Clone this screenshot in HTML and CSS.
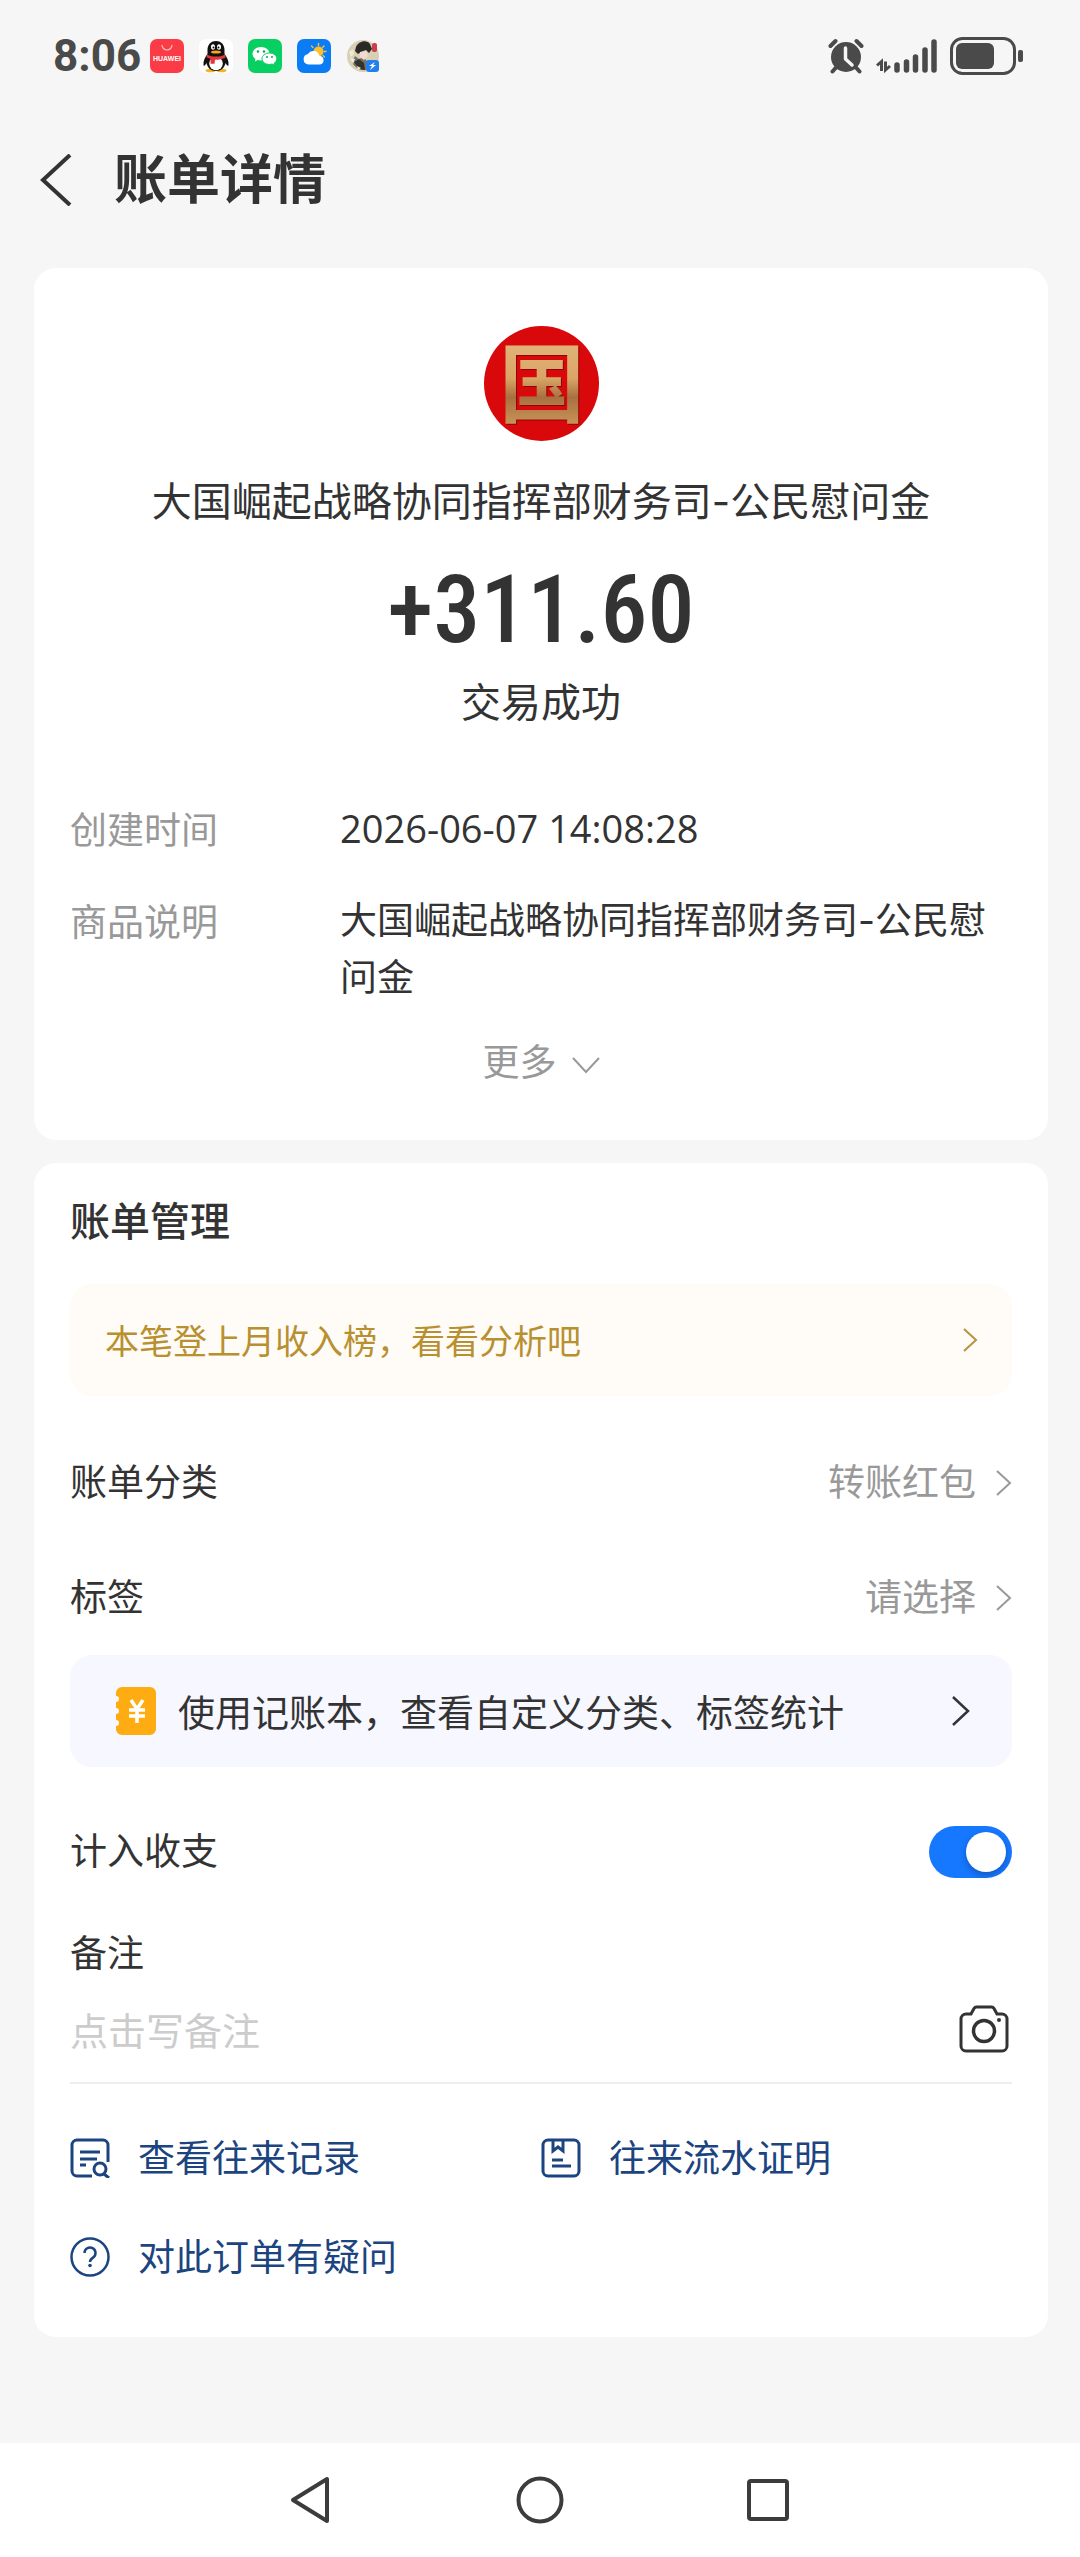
FILE: index.html
```
<!DOCTYPE html>
<html lang="zh-CN">
<head>
  <meta charset="UTF-8" />
  <meta name="viewport" content="width=device-width, initial-scale=1" />
  <title>账单详情</title>
  <link rel="stylesheet" href="styles.css">
</head>
<body>

  <!-- Status Bar -->
  <div class="status-bar">
    <span class="clock">8:06</span>
    <div class="app-icons">
      <svg width="34" height="34" viewBox="0 0 34 34">
        <rect width="34" height="34" rx="7" fill="#fb3b45"/>
        <path d="M12 6a5 5 0 0 0 10 0" fill="none" stroke="#ffc4c6" stroke-width="1.2"/>
        <text x="17" y="22" class="tiny-brand" text-anchor="middle">HUAWEI</text>
      </svg>
      <svg width="34" height="34" viewBox="0 0 34 34">
        <rect width="34" height="34" rx="7" fill="#fff"/>
        <ellipse cx="11.500" cy="31.500" rx="5" ry="1.800" fill="#f5b324"/>
        <ellipse cx="22.500" cy="31.500" rx="5" ry="1.800" fill="#f5b324"/>
        <path d="M17 2c-6 0-8.500 4.500-8.500 9v4C6 18 4 22 4.500 26c.3 2 2 0 3-2 1 5 4.500 8 9.500 8s8.500-3 9.500-8c1 2 2.700 4 3 2 .5-4-1.500-8-4-11v-4c0-4.500-2.500-9-8.500-9z" fill="#111"/>
        <ellipse cx="17" cy="24.500" rx="6.800" ry="6.800" fill="#fff"/>
        <ellipse cx="14" cy="8" rx="2" ry="2.800" fill="#fff"/>
        <ellipse cx="20" cy="8" rx="2" ry="2.800" fill="#fff"/>
        <circle cx="14.500" cy="8.500" r="1" fill="#111"/>
        <circle cx="19.500" cy="8.500" r="1" fill="#111"/>
        <ellipse cx="17" cy="13" rx="5" ry="1.600" fill="#f5a623"/>
        <path d="M8 15.500c5 3 13 3 18 0l.6 3c-3 1.800-6.600 2.300-10.600 2.300l-.5 4h-4v-5c-1.600-.4-3-1-4-1.600z" fill="#e8343c"/>
      </svg>
      <svg width="34" height="34" viewBox="0 0 34 34">
        <rect width="34" height="34" rx="7" fill="#07cf62"/>
        <path d="M13 8c-5 0-8.500 3-8.500 6.800 0 2.200 1.200 4 3 5.300l-.7 2.400 3-1.500c1 .3 2 .4 3.200.4 5 0 8.500-2.800 8.500-6.600S18 8 13 8z" fill="#fff"/>
        <path d="M21.500 14c-4.300 0-7.500 2.500-7.500 5.700s3.200 5.700 7.500 5.700c1 0 1.800-.1 2.600-.4l2.600 1.300-.6-2.100c1.700-1.100 2.700-2.700 2.700-4.500 0-3.200-3-5.700-7.300-5.700z" fill="#fff" stroke="#07cf62" stroke-width="1"/>
        <g fill="#07a850"><circle cx="10" cy="12.500" r="1.200"/><circle cx="16" cy="12.500" r="1.200"/><circle cx="19" cy="18" r="1"/><circle cx="24" cy="18" r="1"/></g>
      </svg>
      <svg width="34" height="34" viewBox="0 0 34 34">
        <rect width="34" height="34" rx="7" fill="#0a7cf5"/>
        <circle cx="21.500" cy="12.500" r="5" fill="#fdc02f"/>
        <path d="M21.500 4.500v2M29 12.500h-2M14.500 7l1.500 1.500M27 7l-1.500 1.500M27.500 18l-1.500-1.500" stroke="#fdc02f" stroke-width="1.400" stroke-linecap="round"/>
        <path d="M11.500 25.500a5.300 5.300 0 0 1-.5-10.500 6.300 6.300 0 0 1 11.500 1.800 4.400 4.400 0 0 1 .5 8.700z" fill="#fff"/>
      </svg>
      <svg width="34" height="34" viewBox="0 0 34 34">
        <circle cx="17" cy="17" r="16" fill="#d8cfb4"/>
        <path d="M10 8c2-6 11-8 14-3l2 5-3 4-3-3-5 2-3 2-3-3z" fill="#2b2a29"/>
        <path d="M9 17l4 3 4-2 4 4-1 9c-6 1-12-3-14-8z" fill="#777265"/>
        <path d="M8 23l5-3 5 4 1 7-6-1z" fill="#33322f"/>
        <path d="M14 13l6-1 2 5-4 4-4-3z" fill="#f2d9cf"/>
        <path d="M4 19l5 1-2 5zM11 27l4 2-3 2z" fill="#eee8d6"/>
        <path d="M3 13l4-3 1 5-3 3z" fill="#efe9d2"/>
        <rect x="26" y="4" width="5" height="9" rx="2" fill="#c7404b"/>
        <rect x="20" y="21" width="13" height="12" rx="3" fill="#2180ee"/>
        <path d="M29 23l-6 4h3l-2 4 6-5h-3z" fill="#fff"/>
      </svg>
    </div>

    <div class="system-icons">
      <svg width="36" height="36" viewBox="0 0 36 36">
        <circle cx="18" cy="19" r="15" fill="#4a4a4a"/>
        <path d="M2.500 8l5-5M33.500 8l-5-5M4.500 33.500l3.500-4M31.500 33.500l-3.500-4" stroke="#4a4a4a" stroke-width="4" stroke-linecap="round"/>
        <path d="M17.500 10v11l6.500 6" fill="none" stroke="#f6f6f6" stroke-width="3.500" stroke-linecap="round" stroke-linejoin="round"/>
      </svg>
      <svg width="62" height="36" viewBox="0 0 62 36">
        <path d="M5.500 33V23.500L1 27.500M9.500 23.500V32L14 28" fill="none" stroke="#4a4a4a" stroke-width="3"/>
        <path d="M21 27v5M30.500 24v8M39.500 19v13M49 12v20M58 4v28" stroke="#4a4a4a" stroke-width="5.500" stroke-linecap="round"/>
      </svg>
      <svg width="74" height="38" viewBox="0 0 74 38">
        <rect x="1.500" y="1.500" width="63" height="35" rx="11" fill="none" stroke="#4a4a4a" stroke-width="3"/>
        <rect x="6" y="6" width="38" height="26" rx="6" fill="#4a4a4a"/>
        <rect x="68" y="13" width="5" height="12" rx="2" fill="#4a4a4a"/>
      </svg>
    </div>
  </div>

  <!-- Page Header -->
  <header class="page-header">
    <button type="button" class="back-btn" aria-label="返回">
      <svg width="32" height="52" viewBox="0 0 32 52"><path d="M30 1L3 26l27 25" fill="none" stroke="#333" stroke-width="4"/></svg>
    </button>
    <h1>账单详情</h1>
  </header>

  <main class="content">

    <!-- Bill Summary -->
    <section class="card summary">
      <svg class="avatar" viewBox="0 0 115 115">
        <defs>
          <linearGradient id="gold" x1="0" y1="0" x2="0" y2="1">
            <stop offset="0" stop-color="#e8c088"/>
            <stop offset="0.500" stop-color="#d9a566"/>
            <stop offset="0.650" stop-color="#a87040"/>
            <stop offset="1" stop-color="#dda968"/>
          </linearGradient>
        </defs>
        <circle cx="57.500" cy="57.500" r="57.500" fill="#d9080b"/>
        <text x="59" y="91" class="avatar-text avatar-shadow" text-anchor="middle">国</text>
        <text x="58" y="90" class="avatar-text" text-anchor="middle" fill="url(#gold)">国</text>
      </svg>
      <p class="payee">大国崛起战略协同指挥部财务司-公民慰问金</p>
      <p class="amount">+311.60</p>
      <p class="state">交易成功</p>

      <dl class="details">
        <dt>创建时间</dt>
        <dd class="date">2026-06-07 14:08:28</dd>
        <dt>商品说明</dt>
        <dd>大国崛起战略协同指挥部财务司-公民慰问金</dd>
      </dl>

      <button type="button" class="more-btn">
        更多
        <svg width="28" height="18" viewBox="0 0 28 18"><path d="M1 1l13 14L27 1" fill="none" stroke="#999" stroke-width="2"/></svg>
      </button>
    </section>

    <!-- Bill Management -->
    <section class="card manage">
      <h2>账单管理</h2>

      <a href="#" class="banner banner-rank">
        <span>本笔登上月收入榜，看看分析吧</span>
        <svg width="16" height="26" viewBox="0 0 16 26"><path d="M2 2l12 11L2 24" fill="none" stroke="#b8923e" stroke-width="2"/></svg>
      </a>

      <button type="button" class="row">
        <span>账单分类</span>
        <span class="value">转账红包
          <svg width="16" height="26" viewBox="0 0 16 26"><path d="M1 1l13 12L1 25" fill="none" stroke="#999" stroke-width="2"/></svg>
        </span>
      </button>
      <button type="button" class="row">
        <span>标签</span>
        <span class="value">请选择
          <svg width="16" height="26" viewBox="0 0 16 26"><path d="M1 1l13 12L1 25" fill="none" stroke="#999" stroke-width="2"/></svg>
        </span>
      </button>

      <a href="#" class="banner banner-ledger">
        <svg width="42" height="48" viewBox="0 0 42 48">
          <path d="M8 0h28a6 6 0 0 1 6 6v36a6 6 0 0 1-6 6H8a6 6 0 0 1-6-6v-3a3 3 0 0 0 0-6v-6a3 3 0 0 0 0-6v-6a3 3 0 0 0 0-6V6a6 6 0 0 1 6-6z" fill="#ffac13"/>
          <path d="M17 13l6 9 6-9M23 22v14M15 23h16M15 29h16" fill="none" stroke="#fff" stroke-width="3.500"/>
        </svg>
        <span>使用记账本，查看自定义分类、标签统计</span>
        <svg width="20" height="32" viewBox="0 0 20 32"><path d="M2 2l15 14L2 30" fill="none" stroke="#333" stroke-width="2.500"/></svg>
      </a>

      <div class="row">
        <label for="countIn">计入收支</label>
        <input type="checkbox" id="countIn" class="switch" checked />
      </div>

      <label for="remark" class="remark-label">备注</label>
      <div class="remark">
        <input type="text" id="remark" placeholder="点击写备注" />
        <button type="button" aria-label="添加图片">
          <svg width="50" height="48" viewBox="0 0 50 48">
            <path d="M7 9h5l3-5.500A3 3 0 0 1 17.500 2h15A3 3 0 0 1 35 3.500L38 9h5a5 5 0 0 1 5 5v27a5 5 0 0 1-5 5H7a5 5 0 0 1-5-5V14a5 5 0 0 1 5-5z" fill="none" stroke="#333" stroke-width="3"/>
            <circle cx="25" cy="26" r="10.500" fill="none" stroke="#333" stroke-width="3.500"/>
            <circle cx="40" cy="15" r="2" fill="#333"/>
          </svg>
        </button>
      </div>

      <nav class="links">
        <a href="#">
          <svg width="40" height="40" viewBox="0 0 40 40">
            <path d="M22 38H7a5 5 0 0 1-5-5V7a5 5 0 0 1 5-5h26a5 5 0 0 1 5 5v17" fill="none" stroke="#1b4480" stroke-width="3"/>
            <path d="M10 14h20M10 21h17M10 27h6M34 36l5 4" stroke="#1b4480" stroke-width="3"/>
            <circle cx="30" cy="31" r="6" fill="none" stroke="#1b4480" stroke-width="3"/>
          </svg>
          查看往来记录
        </a>
        <a href="#">
          <svg width="40" height="40" viewBox="0 0 40 40">
            <rect x="2" y="2" width="36" height="36" rx="5" fill="none" stroke="#1b4480" stroke-width="3"/>
            <path d="M12 2v11l5-4 5 4V2M11 22h11M11 28h19" fill="none" stroke="#1b4480" stroke-width="3"/>
          </svg>
          往来流水证明
        </a>
        <a href="#">
          <svg width="40" height="40" viewBox="0 0 40 40">
            <circle cx="20" cy="20" r="18.500" fill="none" stroke="#1b4480" stroke-width="2.500"/>
            <path d="M14.500 16a5.500 5.500 0 1 1 8.500 4.600c-2 1.300-3 2.200-3 4.400" fill="none" stroke="#1b4480" stroke-width="2.500"/>
            <circle cx="20" cy="28.500" r="1.800" fill="#1b4480"/>
          </svg>
          对此订单有疑问
        </a>
      </nav>
    </section>
  </main>

  <!-- System Navigation -->
  <footer class="nav-bar">
    <button type="button" aria-label="返回">
      <svg width="48" height="50" viewBox="0 0 48 50"><path d="M5 25L39 4v42z" fill="none" stroke="#3c3c3c" stroke-width="4" stroke-linejoin="round"/></svg>
    </button>
    <button type="button" aria-label="主页">
      <svg width="48" height="50" viewBox="0 0 48 50"><circle cx="24" cy="25" r="21.500" fill="none" stroke="#3c3c3c" stroke-width="4"/></svg>
    </button>
    <button type="button" aria-label="最近任务">
      <svg width="48" height="50" viewBox="0 0 48 50"><rect x="5" y="6" width="38" height="38" rx="2" fill="none" stroke="#3c3c3c" stroke-width="4"/></svg>
    </button>
  </footer>

</body>
</html>
```
FILE: styles.css
```
/* === Base === */
* {
  box-sizing: border-box;
}

body {
  display: flex;
  flex-direction: column;
  min-height: 100vh;
  margin: 0;
  background: #f6f6f6;
  color: #333;
  font-family: "Noto Sans CJK SC", sans-serif;
  font-size: 37px;
  line-height: 56px;
}

h1, h2, p, dl, dd {
  margin: 0;
}

button, input {
  padding: 0;
  border: none;
  background: none;
  color: inherit;
  font: inherit;
}

button {
  cursor: pointer;
}

a {
  color: inherit;
  text-decoration: none;
}

svg {
  display: block;
  flex: none;
}

/* === Status Bar === */
.status-bar {
  display: flex;
  align-items: center;
  height: 112px;
  padding: 0 56px 0 53px;
}

.clock {
  color: #4a4a4a;
  font-family: Roboto, sans-serif;
  font-size: 44px;
  font-weight: 700;
}

.app-icons {
  display: flex;
  gap: 15px;
  margin-left: 9px;
}

.tiny-brand {
  fill: #fff;
  font-family: "Liberation Sans", sans-serif;
  font-size: 7px;
  font-weight: 700;
}

.system-icons {
  display: flex;
  align-items: center;
  gap: 12px;
  margin-left: auto;
}

/* === Header === */
.page-header {
  display: flex;
  align-items: center;
  gap: 42px;
  height: 136px;
  padding: 0 40px;
}

h1 {
  padding-bottom: 8px;
  font-size: 53px;
  font-weight: 700;
  line-height: 72px;
}

/* === Cards === */
.content {
  display: flex;
  flex-direction: column;
  gap: 23px;
  padding: 20px 32px 48px 34px;
}

.card {
  padding: 0 36px;
  border-radius: 22px;
  background: #fff;
}

/* === Summary === */
.summary {
  display: flex;
  flex-direction: column;
  align-items: center;
  padding-top: 58px;
  padding-bottom: 52px;
}

.avatar {
  width: 115px;
  height: 115px;
  overflow: visible;
}

.avatar-text {
  font-family: "Noto Sans CJK SC", sans-serif;
  font-size: 86px;
  font-weight: 700;
  line-height: 86px;
}

.avatar-shadow {
  fill: #8c0406;
}

.payee,
.state {
  font-size: 40px;
}

.payee {
  margin-top: 33px;
  font-family: Inter, "Noto Sans CJK SC", sans-serif;
}

.amount {
  margin-top: 30px;
  font-family: "Roboto Condensed", Roboto, sans-serif;
  font-size: 94px;
  font-weight: 500;
  line-height: 100px;
}

.state {
  margin-top: 12px;
}

.details {
  display: grid;
  grid-template-columns: 270px 1fr;
  row-gap: 35px;
  width: 100%;
  margin-top: 72px;
  line-height: 57px;
}

.details dt {
  color: #999;
}

.details dd {
  font-family: Inter, "Noto Sans CJK SC", sans-serif;
}

.details .date {
  font-family: "Open Sans", sans-serif;
  font-size: 38px;
}

.more-btn {
  display: flex;
  align-items: center;
  gap: 15px;
  margin-top: 26px;
  color: #999;
}

.more-btn svg {
  margin-top: 12px;
}

/* === Bill Management === */
.manage {
  padding-top: 28px;
  padding-bottom: 54px;
}

h2 {
  font-size: 40px;
  font-weight: 500;
}

.banner {
  display: flex;
  align-items: center;
  height: 112px;
  border-radius: 22px;
}

.banner span {
  flex: 1;
}

.banner-rank {
  margin: 37px 0 26px;
  padding: 0 34px 0 35px;
  background: #fffbf6;
  color: #b8902f;
  font-size: 34px;
}

.banner-ledger {
  gap: 22px;
  margin: 3px 0 24px;
  padding: 0 41px 0 44px;
  background: #f6f7ff;
}

.row {
  display: flex;
  align-items: center;
  justify-content: space-between;
  width: 100%;
  height: 115px;
}

.value {
  display: flex;
  align-items: center;
  gap: 20px;
  color: #999;
}

.value svg {
  margin-top: 6px;
}

/* === Switch === */
.switch {
  display: flex;
  align-items: center;
  justify-content: flex-end;
  width: 83px;
  height: 52px;
  margin: 6px 0 0;
  padding: 6px;
  border-radius: 26px;
  background: #ccc;
  appearance: none;
  cursor: pointer;
}

.switch::before {
  content: "";
  width: 40px;
  height: 40px;
  border-radius: 50%;
  background: #fff;
  box-shadow: 0 3px 6px rgba(0, 0, 0, 0.25);
}

.switch:checked {
  background: #1677ff;
}

.switch:not(:checked) {
  justify-content: flex-start;
}

/* === Remark === */
.remark-label {
  display: block;
  margin-top: 17px;
}

.remark {
  display: flex;
  align-items: center;
  justify-content: space-between;
  height: 105px;
  padding: 0 3px 3px 0;
  border-bottom: 2px solid #eee;
}

.remark input {
  flex: 1;
  min-width: 0;
  height: 56px;
  font-size: 38px;
  outline: none;
}

.remark input::placeholder {
  color: #ccc;
}

/* === Links === */
.links {
  display: grid;
  grid-template-columns: 1fr 1fr;
  row-gap: 43px;
  margin-top: 44px;
  color: #1b4480;
}

.links a {
  display: flex;
  align-items: center;
  gap: 28px;
}

.links svg {
  margin-top: 4px;
}

/* === System Navigation === */
.nav-bar {
  display: flex;
  align-items: center;
  justify-content: center;
  gap: 180px;
  height: 114px;
  margin-top: auto;
  background: #fff;
}
```
